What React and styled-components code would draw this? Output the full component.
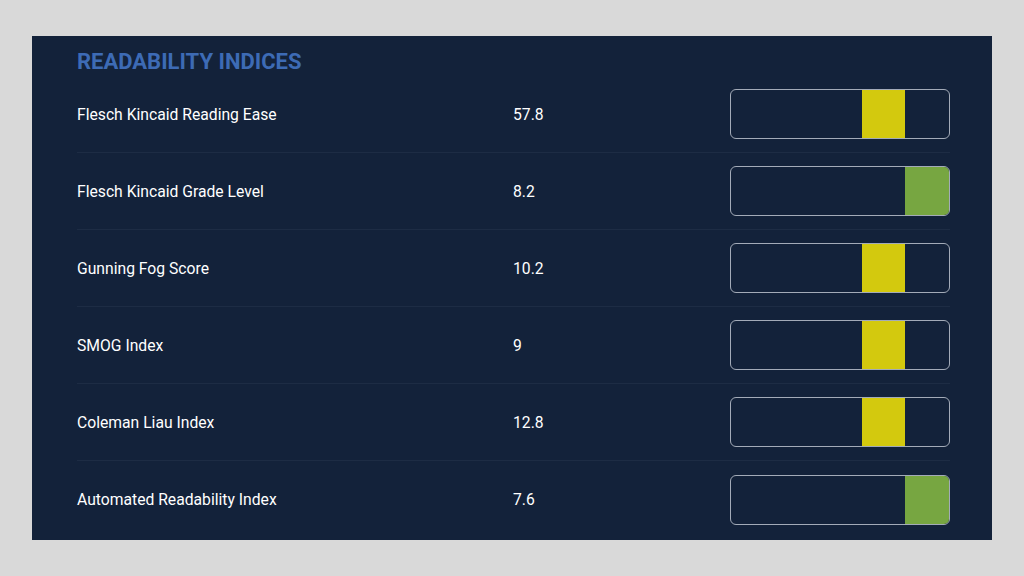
import styled, { createGlobalStyle } from 'styled-components';

const GlobalStyle = createGlobalStyle`
    body {
        margin: 0;
        background: #d9d9d9;
        font-family: Roboto, 'Liberation Sans', sans-serif;
    }
`;

const indices = [
    { name: 'Flesch Kincaid Reading Ease', value: '57.8', level: 3, tone: 'yellow' },
    { name: 'Flesch Kincaid Grade Level', value: '8.2', level: 4, tone: 'green' },
    { name: 'Gunning Fog Score', value: '10.2', level: 3, tone: 'yellow' },
    { name: 'SMOG Index', value: '9', level: 3, tone: 'yellow' },
    { name: 'Coleman Liau Index', value: '12.8', level: 3, tone: 'yellow' },
    { name: 'Automated Readability Index', value: '7.6', level: 4, tone: 'green' },
];

const tones = {
    yellow: '#d3c90e',
    green: '#77a641',
};

export default function App() {
    return (
        <>
            <GlobalStyle />
            <Page>
                <Panel>
                    <Title>READABILITY INDICES</Title>
                    {indices.map((item, i) => (
                        <Row key={item.name} last={i === indices.length - 1}>
                            <Label>{item.name}</Label>
                            <Value>{item.value}</Value>
                            <Meter>
                                {[0, 1, 2, 3, 4].map((s) => (
                                    <Segment key={s} color={s === item.level ? tones[item.tone] : null} />
                                ))}
                            </Meter>
                        </Row>
                    ))}
                </Panel>
            </Page>
        </>
    );
};

const Page = styled.div`
    width: 1024px;
    height: 576px;
    padding: 36px 32px;
    box-sizing: border-box;
`;

const Panel = styled.div`
    height: 504px;
    background: #13223a;
    padding: 0 42px 0 45px;
    box-sizing: border-box;
`;

const Title = styled.h2`
    margin: 0;
    height: 40px;
    display: flex;
    align-items: center;
    padding-top: 11px;
    box-sizing: border-box;
    color: #3d6bb5;
    font-size: 22px;
    font-weight: 700;
`;

const Row = styled.div`
    display: grid;
    grid-template-columns: 436px 217px 220px;
    align-items: center;
    height: 77px;
    box-sizing: border-box;
    border-bottom: ${(p) => (p.last ? 'none' : '1px solid #1d2c44')};
`;

const Label = styled.div`
    color: #ffffff;
    font-size: 15.7px;
`;

const Value = styled.div`
    color: #ffffff;
    font-size: 15.7px;
`;

const Meter = styled.div`
    display: flex;
    height: 50px;
    border: 1.5px solid #a3abb8;
    border-radius: 6px;
    box-sizing: border-box;
    overflow: hidden;
`;

const Segment = styled.div`
    flex: 1;
    background: ${(p) => p.color || 'transparent'};
`;
